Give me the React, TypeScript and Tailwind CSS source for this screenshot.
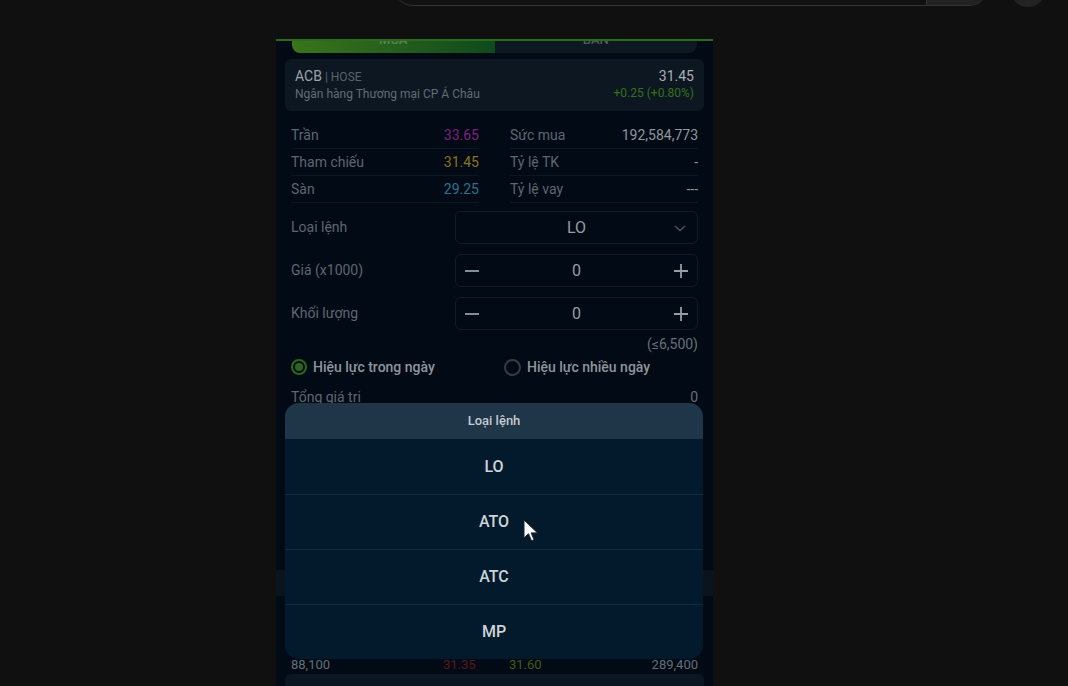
import React from "react";

const infoLeft = [
  { label: "Trần", value: "33.65", color: "text-[#7f2180]" },
  { label: "Tham chiếu", value: "31.45", color: "text-[#8e701c]" },
  { label: "Sàn", value: "29.25", color: "text-[#2b7290]" },
];

const infoRight = [
  { label: "Sức mua", value: "192,584,773" },
  { label: "Tỷ lệ TK", value: "-" },
  { label: "Tỷ lệ vay", value: "---" },
];

const orderTypes = ["LO", "ATO", "ATC", "MP"];

function Stepper({ value }: { value: string }) {
  return (
    <div className="flex items-center justify-between w-[243px] h-[33px] rounded-md border border-[#121c27] px-[8px]">
      <svg width="16" height="16" viewBox="0 0 16 16" className="text-[#959da5]">
        <path d="M1 8h14" stroke="currentColor" strokeWidth="1.8" />
      </svg>
      <span className="text-[16px] text-[#959da5]">{value}</span>
      <svg width="16" height="16" viewBox="0 0 16 16" className="text-[#959da5]">
        <path d="M1 8h14M8 1v14" stroke="currentColor" strokeWidth="1.8" />
      </svg>
    </div>
  );
}

export default function App() {
  return (
    <div
      className="w-[1068px] h-[686px] bg-[#101010] overflow-hidden"
      style={{ fontFamily: "Roboto, 'Noto Sans', sans-serif" }}
    >
      {/* Browser top bar (cut off) */}
      <div className="h-[39px] flex items-start">
        <div className="ml-[393px] -mt-[34px] w-[596px] h-[40px] rounded-full border border-[#333] bg-[#111] flex justify-end overflow-hidden">
          <div className="w-[62px] h-full bg-[#222] border-l border-[#333]" />
        </div>
        <div className="ml-[21px] -mt-[29px] w-[36px] h-[36px] rounded-full bg-[#232323]" />
      </div>

      {/* Phone panel */}
      <div className="relative ml-[276px] w-[437px] h-[647px] bg-[#020b15] border-t-2 border-[#2c6a1e]">
        {/* Tabs */}
        <div className="mx-[16px] h-[12px] flex rounded-b-lg overflow-hidden">
          <div className="flex-1 bg-gradient-to-r from-[#3a751a] to-[#0d4a1c] flex justify-center">
            <span className="-mt-[11px] text-[13px] text-[#5f7f5a] font-medium">MUA</span>
          </div>
          <div className="flex-1 bg-[#0e1821] flex justify-center">
            <span className="-mt-[11px] text-[13px] text-[#4e5862] font-medium">BÁN</span>
          </div>
        </div>

        {/* Stock card */}
        <div className="mt-[6px] mx-[9px] h-[52px] rounded-md bg-[#0c1721] px-[10px] flex items-center justify-between">
          <div className="flex flex-col leading-[17px]">
            <div className="flex items-baseline gap-[3px]">
              <span className="text-[14px] text-[#9ca4ac]">ACB</span>
              <span className="text-[12px] text-[#58626c]">| HOSE</span>
            </div>
            <span className="text-[12px] text-[#626c76]">Ngân hàng Thương mại CP Á Châu</span>
          </div>
          <div className="flex flex-col items-end leading-[17px]">
            <span className="text-[14px] text-[#a8afb6]">31.45</span>
            <span className="text-[12px] text-[#37701a]">+0.25 (+0.80%)</span>
          </div>
        </div>

        {/* Info grid */}
        <div className="mt-[11px] px-[15px] grid grid-cols-2 gap-x-[31px]">
          <div className="flex flex-col">
            {infoLeft.map((r) => (
              <div key={r.label} className="h-[27px] flex items-center justify-between border-b border-[#0c161f] text-[14px]">
                <span className="text-[#5d6771]">{r.label}</span>
                <span className={r.color}>{r.value}</span>
              </div>
            ))}
          </div>
          <div className="flex flex-col">
            {infoRight.map((r) => (
              <div key={r.label} className="h-[27px] flex items-center justify-between border-b border-[#0c161f] text-[14px]">
                <span className="text-[#5d6771]">{r.label}</span>
                <span className="text-[#8f979f]">{r.value}</span>
              </div>
            ))}
          </div>
        </div>

        {/* Order form */}
        <div className="mt-[8px] px-[15px] flex flex-col gap-[10px]">
          <div className="flex items-center justify-between">
            <span className="text-[14px] text-[#5d6771]">Loại lệnh</span>
            <div className="relative flex items-center justify-center w-[243px] h-[33px] rounded-md border border-[#121c27]">
              <span className="text-[16px] text-[#959da5]">LO</span>
              <svg width="14" height="14" viewBox="0 0 14 14" className="absolute right-[10px] text-[#4e5862]">
                <path d="M2 5l5 4.5L12 5" fill="none" stroke="currentColor" strokeWidth="1.4" />
              </svg>
            </div>
          </div>
          <div className="flex items-center justify-between">
            <span className="text-[14px] text-[#5d6771]">Giá (x1000)</span>
            <Stepper value="0" />
          </div>
          <div className="flex items-center justify-between">
            <span className="text-[14px] text-[#5d6771]">Khối lượng</span>
            <Stepper value="0" />
          </div>
        </div>

        <div className="mt-[6px] px-[15px] h-[16px] flex items-center justify-end text-[14px] text-[#66707a]">
          (≤6,500)
        </div>

        <div className="mt-[7px] px-[15px] h-[16px] flex items-center">
          <div className="w-[213px] flex items-center gap-[6px]">
            <span className="w-[16px] h-[16px] rounded-full border-2 border-[#2b661c] flex items-center justify-center">
              <span className="w-[8px] h-[8px] rounded-full bg-[#2b661c]" />
            </span>
            <span className="text-[14px] text-[#8d959d] font-medium">Hiệu lực trong ngày</span>
          </div>
          <div className="flex items-center gap-[6px]">
            <span className="w-[17px] h-[17px] rounded-full border-2 border-[#343d46]" />
            <span className="text-[14px] text-[#8d959d] font-medium">Hiệu lực nhiều ngày</span>
          </div>
        </div>

        <div className="mt-[14px] px-[15px] h-[16px] flex items-center justify-between text-[14px]">
          <span className="text-[#5d6771]">Tổng giá trị</span>
          <span className="text-[#66707a]">0</span>
        </div>

        {/* Content hidden behind the sheet */}
        <div className="mt-[165px] h-[26px] bg-[#0a141e]" />
        <div className="mt-[61px] px-[15px] h-[16px] flex items-center text-[13px]">
          <span className="w-[152px] text-[#646e78]">88,100</span>
          <span className="w-[66px] text-[#5a181c]">31.35</span>
          <span className="flex-1 text-[#445a18]">31.60</span>
          <span className="text-[#646e78]">289,400</span>
        </div>
        <div className="mt-[1px] mx-[9px] h-[30px] rounded-md bg-[#0a1722]" />

        {/* Order type sheet */}
        <div className="absolute top-[362px] left-[9px] w-[418px] rounded-[14px] overflow-hidden bg-[#021a2c]">
          <div className="h-[36px] bg-[#1f3548] flex items-center justify-center">
            <span className="text-[13px] font-medium text-[#c4cbd2]">Loại lệnh</span>
          </div>
          {orderTypes.map((t, i) => (
            <div
              key={t}
              className={
                i === 0
                  ? "h-[55px] flex items-center justify-center"
                  : "h-[55px] flex items-center justify-center border-t border-[#0f2c40]"
              }
            >
              <span className="text-[16px] font-medium text-[#cdd3d8]">{t}</span>
            </div>
          ))}
        </div>

        {/* Mouse pointer */}
        <svg
          width="16"
          height="24"
          viewBox="0 0 16 24"
          className="absolute top-[478px] left-[247px]"
        >
          <path
            d="M1 1v18l4.5-4.2 3 7 2.6-1.1-3-6.8H14.5z"
            fill="#ffffff"
            stroke="#1a2530"
            strokeWidth="1"
            strokeLinejoin="round"
          />
        </svg>
      </div>
    </div>
  );
}
